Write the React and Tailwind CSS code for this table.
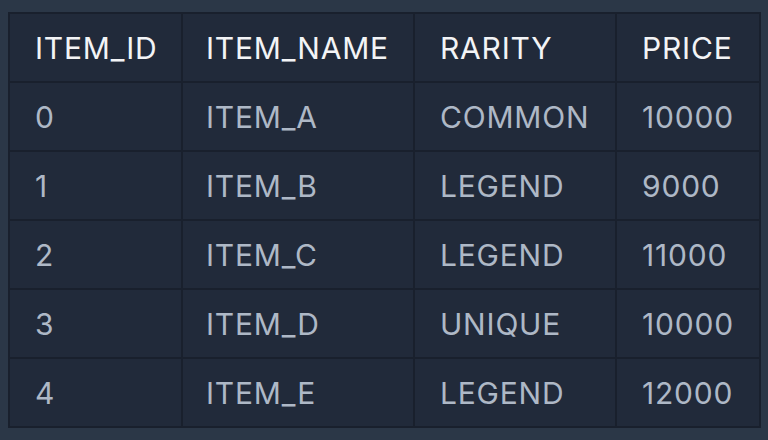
import React from "react";

const rows = [
  { id: 0, name: "ITEM_A", rarity: "COMMON", price: 10000 },
  { id: 1, name: "ITEM_B", rarity: "LEGEND", price: 9000 },
  { id: 2, name: "ITEM_C", rarity: "LEGEND", price: 11000 },
  { id: 3, name: "ITEM_D", rarity: "UNIQUE", price: 10000 },
  { id: 4, name: "ITEM_E", rarity: "LEGEND", price: 12000 },
];

const App = () => {
  return (
    <div
      className="w-[768px] h-[440px] bg-[#2b3747] pt-[12px] pl-[8px]"
      style={{ fontFamily: "Inter, 'Noto Sans', sans-serif" }}
    >
      <table className="table-fixed border-collapse border-2 border-[#19202d] bg-[#212a3a] text-[30px] leading-none tracking-[0.8px] w-[751px]">
        <colgroup>
          <col className="w-[173px]" />
          <col className="w-[232px]" />
          <col className="w-[202px]" />
          <col className="w-[144px]" />
        </colgroup>
        <thead>
          <tr className="h-[69px]">
            {["ITEM_ID", "ITEM_NAME", "RARITY", "PRICE"].map((h, i) => (
              <th
                key={h}
                className={`border-2 border-[#19202d] pr-[20px] text-left font-normal text-[#f3f4f6] ${
                  i === 1 ? "pl-[23px]" : "pl-[25px]"
                }`}
              >
                {h}
              </th>
            ))}
          </tr>
        </thead>
        <tbody>
          {rows.map((r) => (
            <tr key={r.id} className="h-[69px] text-[#aeb8c6]">
              <td className="border-2 border-[#19202d] pl-[25px] pr-[20px]">{r.id}</td>
              <td className="border-2 border-[#19202d] pl-[23px] pr-[20px]">{r.name}</td>
              <td className="border-2 border-[#19202d] pl-[25px] pr-[20px]">{r.rarity}</td>
              <td className="border-2 border-[#19202d] pl-[25px] pr-[20px]">{r.price}</td>
            </tr>
          ))}
        </tbody>
      </table>
    </div>
  );
};

export default App;
